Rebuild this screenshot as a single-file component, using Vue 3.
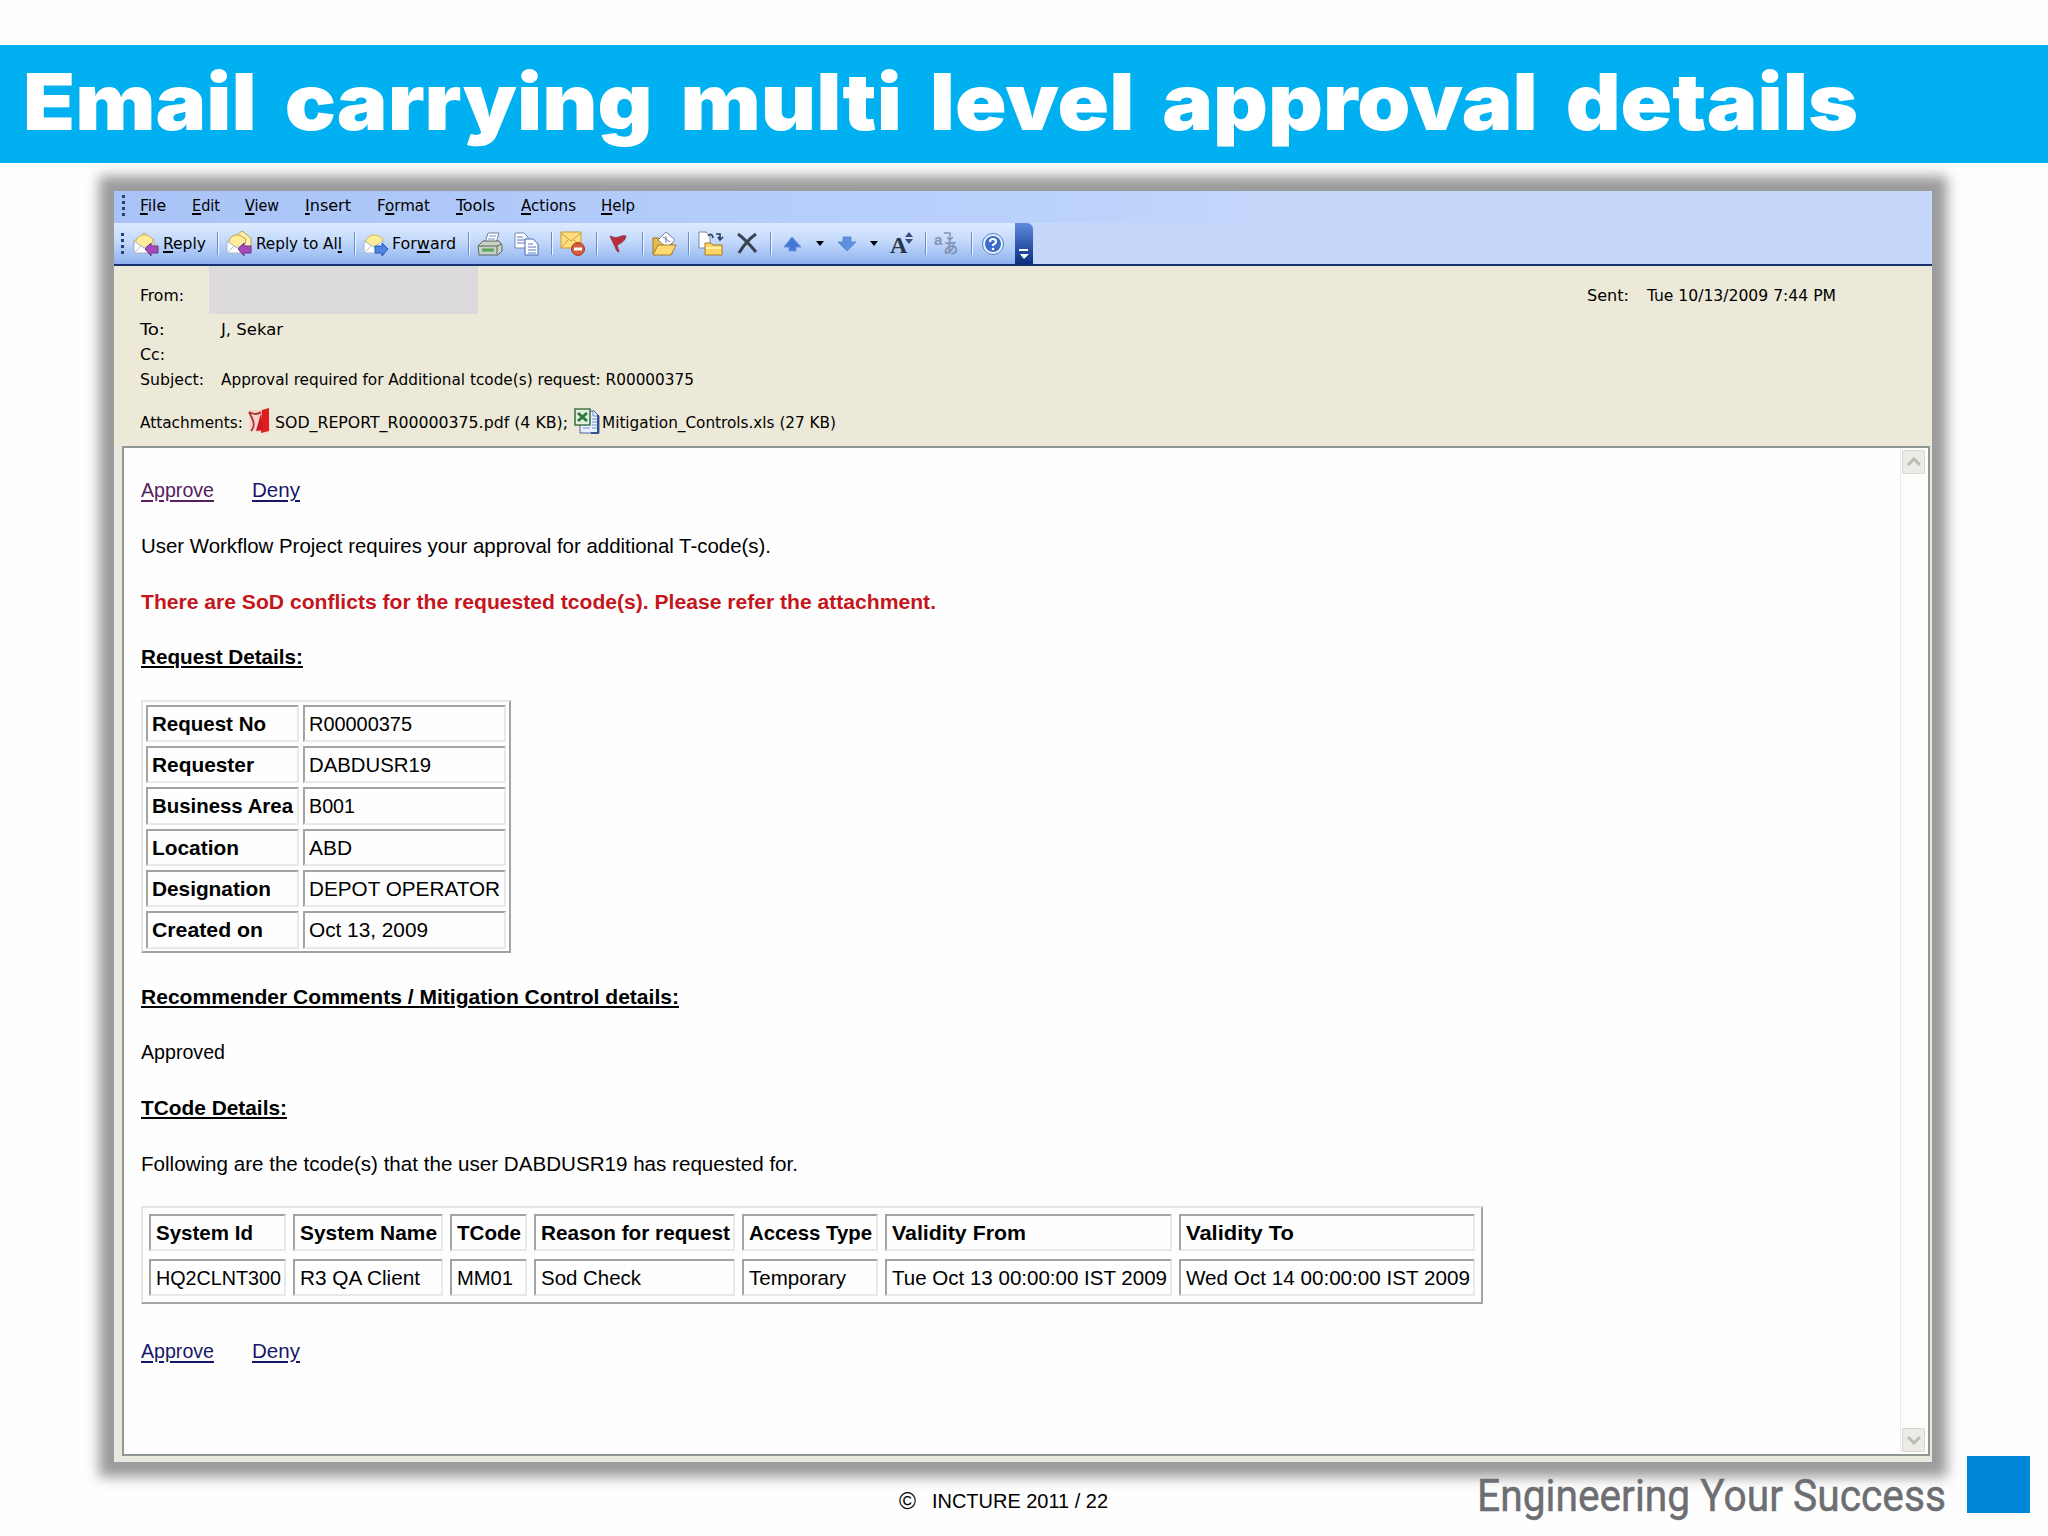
<script setup>
// stretches a run of text to the given width in px
const vFit = {
  mounted(el, { value }) {
    const natural = el.getBoundingClientRect().width
    el.style.transform = `scaleX(${value / natural})`
    el.style.marginRight = `${value - natural}px`
  },
}

const menus = [
  { key: 'F', rest: 'ile', w: 26 },
  { key: 'E', rest: 'dit', w: 28 },
  { key: 'V', rest: 'iew', w: 34 },
  { key: 'I', rest: 'nsert', w: 46 },
  { pre: 'F', key: 'o', rest: 'rmat', w: 53 },
  { key: 'T', rest: 'ools', w: 39 },
  { key: 'A', rest: 'ctions', w: 55 },
  { key: 'H', rest: 'elp', w: 34 },
]

const details = [
  { label: 'Request No', lw: 114, value: 'R00000375', vw: 103 },
  { label: 'Requester', lw: 102, value: 'DABDUSR19', vw: 122 },
  { label: 'Business Area', lw: 141, value: 'B001', vw: 46 },
  { label: 'Location', lw: 87, value: 'ABD', vw: 43 },
  { label: 'Designation', lw: 119, value: 'DEPOT OPERATOR', vw: 191 },
  { label: 'Created on', lw: 111, value: 'Oct 13, 2009', vw: 119 },
]

const tcodes = [
  { head: 'System Id', hw: 97, value: 'HQ2CLNT300', vw: 125 },
  { head: 'System Name', hw: 137, value: 'R3 QA Client', vw: 120 },
  { head: 'TCode', hw: 64, value: 'MM01', vw: 56 },
  { head: 'Reason for request', hw: 189, value: 'Sod Check', vw: 100 },
  { head: 'Access Type', hw: 123, value: 'Temporary', vw: 97 },
  { head: 'Validity From', hw: 134, value: 'Tue Oct 13 00:00:00 IST 2009', vw: 275 },
  { head: 'Validity To', hw: 108, value: 'Wed Oct 14 00:00:00 IST 2009', vw: 284 },
]
</script>

<template>
  <div class="slide">
    <header class="banner">
      <h1 v-fit="1835" class="fit">Email carrying multi level approval details</h1>
    </header>

    <main class="window">
      <div class="menubar">
        <div class="grip"><i v-for="n in 4" :key="n"></i></div>
        <span v-for="m in menus" :key="m.rest" v-fit="m.w" class="fit">{{ m.pre }}<u>{{ m.key }}</u>{{ m.rest }}</span>
      </div>

      <div class="toolbar">
        <div class="grip"><i v-for="n in 4" :key="n"></i></div>
        <svg class="icon" viewBox="0 0 26 26">
          <path d="M1 10 11 2 21 9V21H1Z" fill="#fff4bd" stroke="#b9a88c" />
          <path d="M3 9Q10 -1 20 8L19 13 11 17 3 13Z" fill="#ffed9a" stroke="#d2b25e" />
          <path d="M1 10V22H19V12L11 17Z" fill="#fff" stroke="#a9b4cb" />
          <path d="M1 22 8 15M13 16 19 22" stroke="#b3bdd3" />
          <path d="M12 18 18 12V15H25V22H18V25Z" fill="#a64abb" stroke="#70348c" />
        </svg>
        <span v-fit="43" class="fit"><u>R</u>eply</span>
        <b class="sep"></b>
        <svg class="icon" viewBox="0 0 26 26">
          <path d="M7 7 16 0 25 7V19H7Z" fill="#fff0ad" stroke="#b99d59" />
          <path d="M3 9Q9 -1 20 8L19 13 11 17 3 13Z" fill="#ffed9a" stroke="#c99f4c" />
          <path d="M1 10V22H19V12L11 17Z" fill="#fff" stroke="#a9b4cb" />
          <path d="M1 22 8 15" stroke="#b3bdd3" />
          <path d="M12 18 18 12V15H25V22H18V25Z" fill="#a64abb" stroke="#70348c" />
        </svg>
        <span v-fit="86" class="fit">Reply to Al<u>l</u></span>
        <b class="sep"></b>
        <svg class="icon" viewBox="0 0 26 26">
          <path d="M3 9Q10 -1 20 8L19 13 11 17 3 13Z" fill="#ffed9a" stroke="#d2b25e" />
          <path d="M1 10V22H20V10L11 16Z" fill="#fff" stroke="#a9b4cb" />
          <path d="M1 22 8 15" stroke="#b3bdd3" />
          <path d="M25 18 19 12V15H12V22H19V25Z" fill="#4f86e6" stroke="#2752b2" />
        </svg>
        <span v-fit="64" class="fit">For<u>w</u>ard</span>
        <b class="sep"></b>
        <svg class="icon" viewBox="0 0 26 26">
          <path d="M8 12 11 2H22L19 12Z" fill="#fff" stroke="#73809a" />
          <path d="M12 5H19M11 8H18" stroke="#7593c6" />
          <path d="M1 15 6 10H22L25 14V20L21 24H2Z" fill="#c9d2c7" stroke="#59665f" />
          <path d="M1 15H20L25 13M20 15V23" fill="none" stroke="#59665f" />
          <path d="M5 19H17" stroke="#58a45d" stroke-width="3" />
        </svg>
        <svg class="icon" viewBox="0 0 26 26">
          <path d="M1 2H10L14 6V17H1Z" fill="#fff" stroke="#6e87b9" />
          <path d="M3 6H9M3 9H11M3 12H11" stroke="#5576bd" />
          <path d="M11 8H19L24 13V24H11Z" fill="#fff" stroke="#476bb3" />
          <path d="M14 13H19M14 16H22M14 19H22M14 22H22" stroke="#5576bd" />
        </svg>
        <b class="sep"></b>
        <svg class="icon" viewBox="0 0 26 26">
          <path d="M1 1H21V17H1Z" fill="#ffdf7c" stroke="#c79b3e" />
          <path d="M1 2 11 10 21 2M1 17 8 9M21 17 14 9" fill="none" stroke="#c99b3c" />
          <circle cx="18" cy="18" r="6.5" fill="#d45b3c" stroke="#a43c25" />
          <path d="M14 18H22" stroke="#fff" stroke-width="3" />
        </svg>
        <b class="sep"></b>
        <svg class="icon" viewBox="0 0 26 26">
          <path d="M3 5Q8 8 12 6T19 5Q18 11 10 14L12 21 10 20Z" fill="#bd2c3a" stroke="#8e3a50" />
        </svg>
        <b class="sep"></b>
        <svg class="icon" viewBox="0 0 26 26">
          <path d="M2 23V7H8L10 10H21V23Z" fill="#e9b94d" stroke="#9f7628" />
          <path d="M7 9 15 1 24 9 16 17Z" fill="#fff" stroke="#77809a" />
          <path d="M12 6 19 11M15 5V12" stroke="#6c7694" />
          <path d="M2 24 7 14H25L20 24Z" fill="#ffda72" stroke="#a87a25" />
        </svg>
        <b class="sep"></b>
        <svg class="icon" viewBox="0 0 26 26">
          <path d="M1 1H8L12 5V17H1Z" fill="#fff" stroke="#7d8b9c" />
          <path d="M10 5Q14 1 15 7M18 3H22V8M20 6 22 9 25 6" fill="none" stroke="#263d67" stroke-width="1.6" />
          <path d="M7 24V12H13L15 14H24V24Z" fill="#ffd467" stroke="#a77a2a" />
          <path d="M8 17H23" stroke="#fff0ab" stroke-width="2" />
        </svg>
        <svg class="icon" viewBox="0 0 26 26">
          <path d="M3 3Q10 8 21 21M21 3Q11 10 4 22" fill="none" stroke="#3a4250" stroke-width="3" />
        </svg>
        <b class="sep"></b>
        <svg class="icon" viewBox="0 0 26 26">
          <path d="M12 6 21 16H16V20H9V16H4Z" fill="#4278da" stroke="#6a92da" />
        </svg>
        <svg class="caret" viewBox="0 0 10 6"><path d="M1 0H9L5 5Z" /></svg>
        <svg class="icon" viewBox="0 0 26 26">
          <path d="M10 20 1 11H6V6H14V11H19Z" fill="#5b91df" stroke="#5f8bd0" />
        </svg>
        <svg class="caret" viewBox="0 0 10 6"><path d="M1 0H9L5 5Z" /></svg>
        <div class="font-size">A<svg viewBox="0 0 8 12"><path d="M0 5 4 0 8 5ZM0 7H8L4 12Z" fill="#3c4d7c" /></svg></div>
        <b class="sep"></b>
        <div class="translate">
          <span>a</span><span>あ</span>
          <svg viewBox="0 0 10 9"><path d="M1 1H7V7M4 5 7 8 10 5" fill="none" stroke="#8294b5" stroke-width="1.5" /></svg>
        </div>
        <b class="sep"></b>
        <svg class="icon" viewBox="0 0 26 26">
          <circle cx="12" cy="13" r="10.5" fill="#e9f2ff" stroke="#587fc4" />
          <circle cx="12" cy="13" r="8" fill="#3a6dcb" />
          <path d="M9 11Q9 8 12 8T15 11Q15 12 12 14V15" fill="none" stroke="#fff" stroke-width="2.2" />
          <circle cx="12" cy="18" r="1.3" fill="#fff" />
        </svg>
        <div class="overflow">
          <svg viewBox="0 0 12 12"><path d="M1 2H10" stroke="#fff" stroke-width="2" /><path d="M2 6H11L6 11Z" fill="#fff" /></svg>
        </div>
      </div>

      <section class="envelope">
        <div class="line from">
          <span v-fit="44" class="fit">From:</span>
          <div class="masked"></div>
          <div class="sent">
            <span v-fit="42" class="fit">Sent:</span>
            <span v-fit="189" class="fit">Tue 10/13/2009 7:44 PM</span>
          </div>
        </div>
        <div class="line to">
          <span v-fit="25" class="fit">To:</span>
          <span v-fit="62" class="fit">J, Sekar</span>
        </div>
        <div class="line cc"><span v-fit="25" class="fit">Cc:</span></div>
        <div class="line subject">
          <span v-fit="64" class="fit">Subject:</span>
          <span v-fit="473" class="fit">Approval required for Additional tcode(s) request: R00000375</span>
        </div>
        <div class="attachments">
          <span v-fit="103" class="fit">Attachments:</span>
          <svg class="pdf" viewBox="0 0 24 26">
            <path d="M2 2H21L22 23 18 25 1 22Z" fill="#f7d2c9" />
            <path d="M14 2 21 0V23L13 25Z" fill="#e01e20" />
            <path d="M1 4Q8 8 13 4M1 4 4 10Q8 18 3 23" fill="none" stroke="#aa3335" stroke-width="1.8" />
            <path d="M13 5 15 22 8 23Z" fill="#c51b22" />
          </svg>
          <span v-fit="293" class="fit">SOD_REPORT_R00000375.pdf (4 KB);</span>
          <svg class="xls" viewBox="0 0 26 26">
            <path d="M6 3H20L25 8V25H6Z" fill="#e7efff" stroke="#49639c" />
            <path d="M19 2V8H25M18 11H23M18 14H23M18 17H23M18 20H23M9 20H16" fill="none" stroke="#7791c7" />
            <path d="M24 7V25H17" fill="none" stroke="#324f91" stroke-width="2" />
            <path d="M1 1H16V17H1Z" fill="#e1f0dc" stroke="#43744a" stroke-width="1.6" />
            <path d="M4 5 13 13M13 5 4 13" stroke="#2d7a3a" stroke-width="3" />
          </svg>
          <span v-fit="234" class="fit">Mitigation_Controls.xls (27 KB)</span>
        </div>
      </section>

      <section class="reading">
        <div class="mail">
          <p class="links">
            <a v-fit="73" class="fit visited">Approve</a>
            <a v-fit="48" class="fit">Deny</a>
          </p>
          <p><span v-fit="630" class="fit">User Workflow Project requires your approval for additional T-code(s).</span></p>
          <p class="warn"><span v-fit="795" class="fit">There are SoD conflicts for the requested tcode(s). Please refer the attachment.</span></p>
          <p class="title"><span v-fit="162" class="fit">Request Details:</span></p>

          <div class="grid details">
            <template v-for="d in details" :key="d.label">
              <div class="cell head"><span v-fit="d.lw" class="fit">{{ d.label }}</span></div>
              <div class="cell"><span v-fit="d.vw" class="fit">{{ d.value }}</span></div>
            </template>
          </div>

          <p class="title"><span v-fit="538" class="fit">Recommender Comments / Mitigation Control details:</span></p>
          <p><span v-fit="84" class="fit">Approved</span></p>
          <p class="title"><span v-fit="146" class="fit">TCode Details:</span></p>
          <p><span v-fit="657" class="fit">Following are the tcode(s) that the user DABDUSR19 has requested for.</span></p>

          <div class="grid tcodes">
            <div v-for="t in tcodes" :key="t.head" class="cell head"><span v-fit="t.hw" class="fit">{{ t.head }}</span></div>
            <div v-for="t in tcodes" :key="t.value" class="cell"><span v-fit="t.vw" class="fit">{{ t.value }}</span></div>
          </div>

          <p class="links">
            <a v-fit="73" class="fit">Approve</a>
            <a v-fit="48" class="fit">Deny</a>
          </p>
        </div>

        <div class="scrollbar">
          <div class="scroll-btn"><svg viewBox="0 0 16 10"><path d="M2 8 8 2 14 8" /></svg></div>
          <div class="scroll-btn"><svg viewBox="0 0 16 10"><path d="M2 2 8 8 14 2" /></svg></div>
        </div>
      </section>
    </main>

    <footer class="footer">
      <div class="copyright">
        <span>©</span>
        <span v-fit="176" class="fit">INCTURE 2011 / 22</span>
      </div>
      <div v-fit="469" class="fit slogan">Engineering Your Success</div>
      <div class="square"></div>
    </footer>
  </div>
</template>

<style>
body {
  margin: 0;
  background: #fefefe;
}
</style>

<style scoped>
.slide {
  width: 2048px;
  height: 1536px;
  box-sizing: border-box;
  padding-top: 45px;
  overflow: hidden;
  background: #fefefe;
  color: #000;
  font-family: "Liberation Sans", Arial, sans-serif;
}
.fit {
  display: inline-block;
  flex: none;
  white-space: nowrap;
  transform-origin: 0 50%;
}

.banner {
  height: 117.5px;
  padding-left: 23px;
  background: #00b0f0;
}
.banner h1 {
  margin: 0;
  color: #fff;
  font: 900 78px/114px Inter, sans-serif;
  word-spacing: 10px;
}

.window {
  display: flex;
  flex-direction: column;
  width: 1818px;
  height: 1271px;
  margin: 28.5px 0 0 114px;
  background: #e9e8df;
  box-shadow: 0 0 12px 15px #9b9b9b;
  font: 16px/20px "DejaVu Sans Condensed", "DejaVu Sans", sans-serif;
}
.menubar {
  display: flex;
  align-items: center;
  gap: 25.8px;
  height: 32px;
  box-sizing: border-box;
  padding: 0 0 3px 8px;
  background: linear-gradient(90deg, #a9c3f8, #b9d1fb 50%, #c6d7fa 65%);
}
.menubar .grip {
  width: 3px;
  margin-right: -11px;
}
.menubar u,
.toolbar u {
  text-underline-offset: 2px;
  text-decoration-thickness: 1.5px;
}
.grip {
  display: flex;
  flex-direction: column;
  gap: 3px;
}
.grip i {
  width: 3px;
  height: 3px;
  background: #28417c;
}
.toolbar {
  display: grid;
  grid-template-columns:
    12px 30px 54px 9px 30px 98px 9px 29px 76px 9px 37px 37px 9px 36px 11px 35px
    9px 37px 10px 37px 35px 10px 35px 22px 32px 21px 35px 9px 37px 10px 34px 18px;
  align-items: center;
  justify-items: start;
  height: 43px;
  box-sizing: border-box;
  padding-left: 7px;
  border-bottom: 2px solid #17316f;
  background:
    linear-gradient(#dceafe, #c3d9fb 45%, #8eb2ef) 0 0 / 902px 100% no-repeat,
    #c5d8fb;
}
.icon {
  width: 26px;
  height: 26px;
}
.sep {
  width: 1px;
  height: 23px;
  border-right: 1px solid #eef5ff;
  background: #6b8cc9;
}
.caret {
  width: 10px;
  height: 6px;
}
.font-size {
  display: flex;
  align-items: flex-start;
  height: 24px;
  color: #2b3344;
  font: bold 24px/26px "Liberation Serif", serif;
}
.font-size svg {
  width: 8px;
  height: 12px;
  margin-left: -2px;
}
.translate {
  position: relative;
  display: flex;
  width: 26px;
  height: 26px;
  color: #8294b5;
  font: bold 15px/18px "Liberation Sans", "Noto Sans CJK JP", sans-serif;
}
.translate span + span {
  margin-top: 8px;
  margin-left: 1px;
}
.translate svg {
  position: absolute;
  top: 1px;
  left: 9px;
  width: 10px;
  height: 9px;
}
.overflow {
  display: flex;
  align-items: flex-end;
  justify-content: center;
  align-self: stretch;
  width: 18px;
  padding-bottom: 4px;
  box-sizing: border-box;
  border-radius: 0 6px 0 0;
  background: linear-gradient(#5d8ade, #2b53a8 60%, #0c2f7d);
}
.overflow svg {
  width: 12px;
  height: 12px;
}

.envelope {
  display: flex;
  flex-direction: column;
  height: 180px;
  box-sizing: border-box;
  padding-left: 26px;
  background: #ece9d8;
}
.line {
  display: grid;
  grid-template-columns: 81px 1fr;
  justify-items: start;
}
.from {
  grid-template-columns: 69px 269px 1fr;
  height: 48px;
}
.from > .fit {
  padding-top: 20px;
}
.masked {
  width: 269px;
  height: 48px;
  background: #dddadd;
}
.sent {
  display: flex;
  gap: 18px;
  justify-self: end;
  margin-right: 96px;
  padding-top: 20px;
}
.to {
  margin-top: 6px;
}
.cc {
  margin-top: 5px;
}
.subject {
  margin-top: 5px;
}
.attachments {
  display: flex;
  align-items: center;
  height: 28px;
  margin-top: 19px;
}
.pdf {
  width: 24px;
  height: 26px;
  margin: 0 3px 4px 5px;
}
.xls {
  width: 26px;
  height: 26px;
  margin: 0 2px 4px 6px;
}

.reading {
  display: flex;
  flex: 1;
  margin: 0 2px 6px 8px;
  border: 2px solid #8f9793;
  background: #fefefe;
}
.mail {
  flex: 1;
  padding: 14.4px 0 0 17px;
  font: 20.5px/55.6px "Liberation Sans", Arial, sans-serif;
}
.mail p {
  height: 55.6px;
  margin: 0;
}
.links {
  display: flex;
  gap: 38px;
}
.links a {
  color: #16166a;
  text-decoration: underline;
  text-underline-offset: 3px;
  text-decoration-thickness: 1.5px;
}
.links .visited {
  color: #55215f;
}
.warn {
  color: #c4161c;
  font-weight: bold;
}
.title {
  font-weight: bold;
}
.title .fit {
  text-decoration: underline;
  text-underline-offset: 2px;
  text-decoration-thickness: 2px;
}
.grid {
  display: grid;
  box-sizing: border-box;
  border: 2px solid;
  border-color: #e6e6e4 #a3a3a3 #a3a3a3 #e6e6e4;
  line-height: 33px;
}
.cell {
  box-sizing: border-box;
  border: 2px solid;
  border-color: #a3a3a3 #e9e9e7 #e9e9e7 #a3a3a3;
}
.head {
  font-weight: bold;
}
.details {
  grid-template-columns: 153px 203px;
  grid-template-rows: repeat(6, 37.3px);
  gap: 4px;
  width: 370px;
  height: 253px;
  margin: 15px 0 16px;
  padding: 3px;
}
.details .cell {
  padding-left: 4px;
}
.tcodes {
  grid-template-columns: 137px 150px 77px 201px 136px 287px 296px;
  grid-template-rows: 37px 37px;
  gap: 7.4px 7px;
  width: 1342px;
  height: 98px;
  margin: 15px 0 18.6px;
  padding: 6px;
}
.tcodes .cell {
  padding-left: 5px;
}
.scrollbar {
  display: flex;
  flex-direction: column;
  justify-content: space-between;
  width: 23px;
  margin-right: 2px;
  padding: 2px 1px;
  border-left: 1px solid #ecece6;
  background: #fdfdfb;
}
.scroll-btn {
  display: flex;
  align-items: center;
  justify-content: center;
  height: 22px;
  border: 1px solid #d8d8d0;
  border-radius: 2px;
  background: #ecece6;
}
.scroll-btn svg {
  width: 16px;
  height: 10px;
  fill: none;
  stroke: #bdbdb4;
  stroke-width: 3;
}

.footer {
  display: flex;
  align-items: flex-start;
  height: 74px;
}
.copyright {
  display: flex;
  gap: 14px;
  width: 578px;
  margin: 28px 0 0 899px;
  font-size: 20px;
  line-height: 23px;
}
.copyright span:first-child {
  width: 19px;
  font-size: 23px;
}
.slogan {
  margin-top: 8px;
  color: #6d6e71;
  font: 45px/52px Roboto, sans-serif;
  -webkit-text-stroke: 0.5px #6d6e71;
}
.square {
  width: 63px;
  height: 57px;
  margin: -6px 0 0 21px;
  background: #0086d6;
}
</style>
